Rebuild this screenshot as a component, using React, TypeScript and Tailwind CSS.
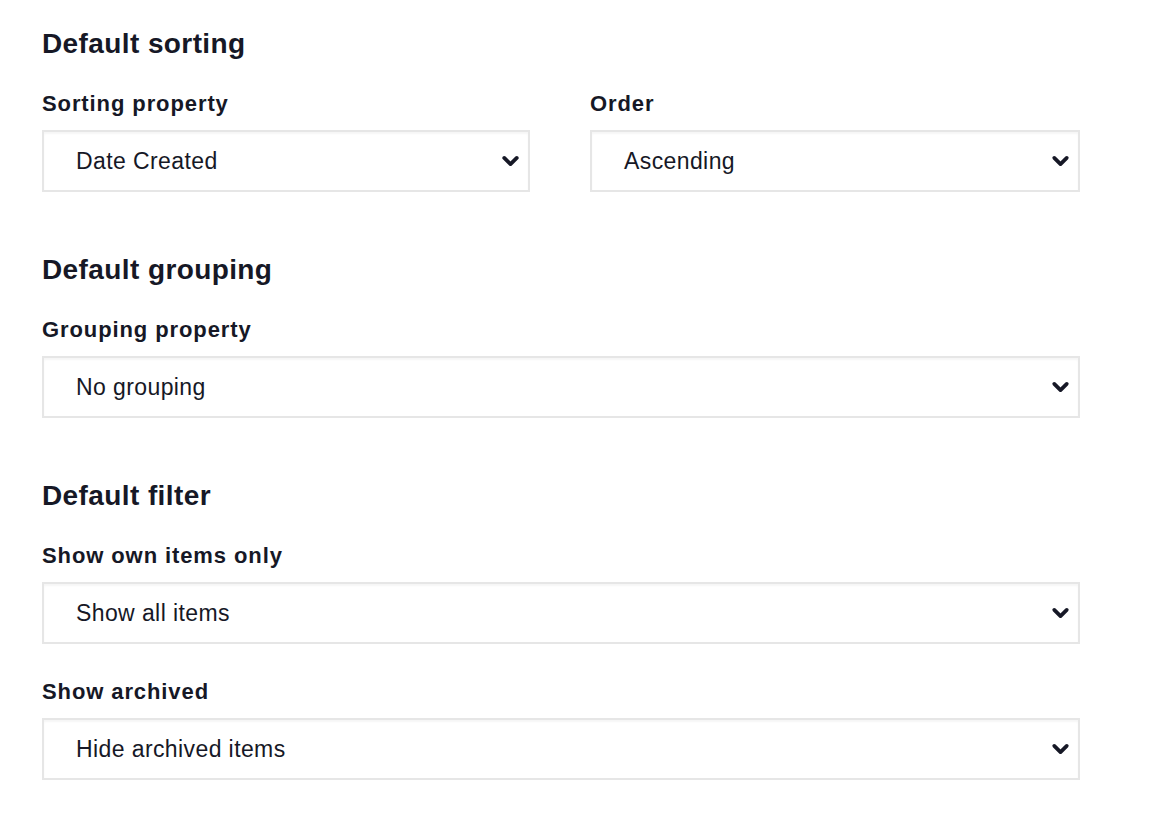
import { ChevronDown } from 'lucide-react';

type Field = {
  label: string;
  value: string;
};

function Select({ label, value }: Field) {
  return (
    <div className="flex flex-col">
      <label className="text-[22px] font-bold leading-[26px] tracking-[0.9px] text-[#161826] mb-[13px]">{label}</label>
      <div className="relative h-[62px] border-2 border-[#e6e6e6] bg-white shadow-[inset_0_2px_2px_rgba(0,0,0,0.04)] flex items-center pl-[32px] pr-4">
        <span className="text-[23px] tracking-[0.4px] text-[#161826]">{value}</span>
        <ChevronDown className="absolute right-[5px] top-1/2 -translate-y-1/2 h-[25px] w-[25px] text-[#161826]" strokeWidth={3.6} />
      </div>
    </div>
  );
}

function Heading({ children }: { children: string }) {
  return <h2 className="text-[28px] font-semibold leading-[34px] tracking-[0.4px] text-[#161826] mb-[30px]">{children}</h2>;
}

export default function App() {
  return (
    <div className="min-h-screen bg-white font-['Liberation_Sans',Arial,sans-serif]">
      <div className="w-[1038px] ml-[42px] pt-[27px]">
        <section>
          <Heading>Default sorting</Heading>
          <div className="grid grid-cols-[488px_1fr] gap-[60px]">
            <Select label="Sorting property" value="Date Created" />
            <Select label="Order" value="Ascending" />
          </div>
        </section>

        <section className="mt-[61px]">
          <Heading>Default grouping</Heading>
          <Select label="Grouping property" value="No grouping" />
        </section>

        <section className="mt-[61px]">
          <Heading>Default filter</Heading>
          <div className="flex flex-col gap-[35px]">
            <Select label="Show own items only" value="Show all items" />
            <Select label="Show archived" value="Hide archived items" />
          </div>
        </section>
      </div>
    </div>
  );
}
